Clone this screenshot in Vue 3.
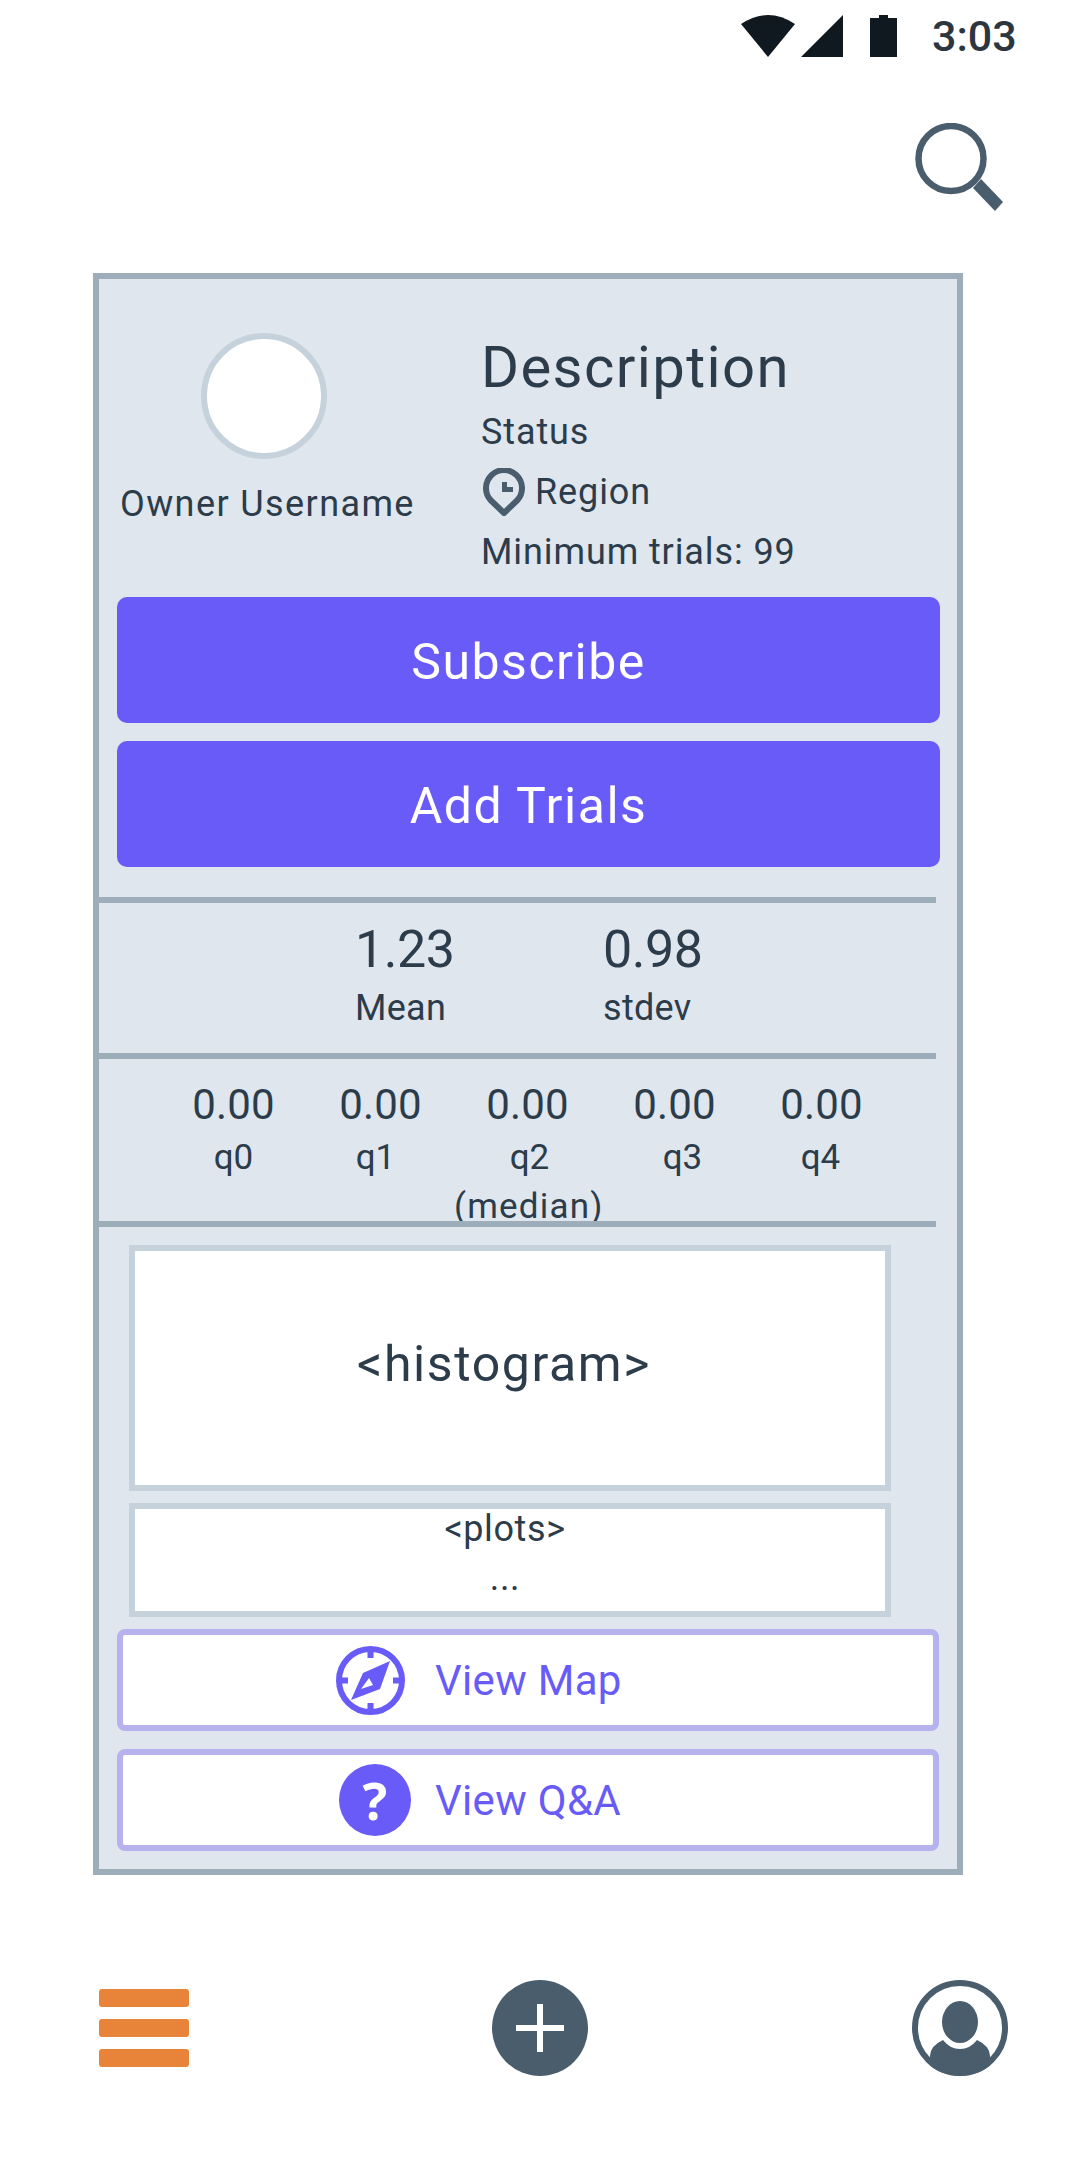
<script setup>
const quartiles = [
  { value: '0.00', label: 'q0', shift: 0 },
  { value: '0.00', label: 'q1', shift: -10 },
  { value: '0.00', label: 'q2', shift: 4 },
  { value: '0.00', label: 'q3', shift: 16 },
  { value: '0.00', label: 'q4', shift: -2 }
]
</script>

<template>
  <div class="screen">
    <!-- status bar -->
    <div class="status-bar">
      <svg class="wifi" viewBox="0 0 54 42"><path d="M27 42 0 9Q27-9 54 9Z" /></svg>
      <svg class="signal" viewBox="0 0 42 42"><path d="M0 42 42 0V42Z" /></svg>
      <svg class="battery" viewBox="0 0 27 42"><path d="M9 0H18V3H27V42H0V3H9Z" /></svg>
      <span class="clock">3:03</span>
    </div>

    <div class="top-bar">
      <svg class="search" viewBox="0 0 90 90">
        <circle cx="36" cy="35.5" r="32.5" fill="none" stroke="#4a5d6d" stroke-width="6.5" />
        <path d="M58 65 66 56 88 79 80 88Z" fill="#4a5d6d" />
      </svg>
    </div>

    <div class="card">
      <div class="head">
        <div class="owner">
          <div class="avatar"></div>
          <div class="owner-name">Owner Username</div>
        </div>
        <div class="info">
          <div class="title">Description</div>
          <div class="line">Status</div>
          <div class="line region">
            <svg class="pin" viewBox="0 0 42 48">
              <path d="M21 45 7.5 32A18 18 0 1 1 34.5 32Z" fill="none" stroke="#4a5d6d" stroke-width="6" stroke-linejoin="round" />
              <path d="M19 14H24V19H30V24H19Z" fill="#4a5d6d" />
            </svg>
            <span>Region</span>
          </div>
          <div class="line">Minimum trials: 99</div>
        </div>
      </div>

      <button class="btn-primary subscribe">Subscribe</button>
      <button class="btn-primary">Add Trials</button>

      <div class="stats">
        <div class="stat">
          <div class="stat-value">1.23</div>
          <div class="stat-label">Mean</div>
        </div>
        <div class="stat">
          <div class="stat-value">0.98</div>
          <div class="stat-label">stdev</div>
        </div>
      </div>

      <div class="quartiles">
        <div v-for="q in quartiles" :key="q.label" class="quartile">
          <div class="q-value">{{ q.value }}</div>
          <div class="q-label" :style="{ marginLeft: q.shift + 'px' }">{{ q.label }}</div>
          <div v-if="q.label === 'q2'" class="q-label q-note">(median)</div>
        </div>
      </div>

      <div class="charts">
        <div class="histogram">&lt;histogram&gt;</div>
        <div class="plots">
          <div>&lt;plots&gt;</div>
          <div>...</div>
        </div>
      </div>

      <button class="btn-outline map-btn">
        <svg class="compass" viewBox="0 0 69 69">
          <circle cx="34.5" cy="34.5" r="31.5" fill="none" stroke="#685bf7" stroke-width="6" />
          <path d="M31.5 3H37.5V12H31.5ZM31.5 57H37.5V66H31.5ZM3 31.5H12V37.5H3ZM57 31.5H66V37.5H57Z" fill="#685bf7" />
          <path fill-rule="evenodd" d="M54 15 44 43 15 54 27 27ZM33 32 25 43 37 39Z" fill="#685bf7" />
        </svg>
        <span>View Map</span>
      </button>
      <button class="btn-outline qa-btn">
        <span class="qa-icon">?</span>
        <span>View Q&amp;A</span>
      </button>
    </div>

    <!-- bottom nav -->
    <div class="bottom-nav">
      <div class="menu">
        <span></span>
        <span></span>
        <span></span>
      </div>
      <svg class="round-icon add" viewBox="0 0 96 96">
        <circle cx="48" cy="48" r="48" fill="#4a5d6d" />
        <path d="M45 24H51V45H72V51H51V72H45V51H24V45H45Z" fill="#fff" />
      </svg>
      <svg class="round-icon profile" viewBox="0 0 96 96">
        <defs>
          <clipPath id="profile-clip"><circle cx="48" cy="48" r="48" /></clipPath>
        </defs>
        <circle cx="48" cy="48" r="45" fill="#fff" stroke="#4a5d6d" stroke-width="6" />
        <ellipse cx="48" cy="42" rx="18" ry="21" fill="#4a5d6d" />
        <path clip-path="url(#profile-clip)" d="M18 96V76Q18 66 31 60 38 69 48 69 58 69 65 60 78 66 78 76V96Z" fill="#4a5d6d" />
      </svg>
    </div>
  </div>
</template>

<style>
html, body {
  margin: 0;
  background: #fff;
}
</style>

<style scoped>
.screen {
  width: 1080px;
  height: 2160px;
  background: #fff;
  color: #2c3c4a;
  font-family: Roboto, "Noto Sans", sans-serif;
  box-sizing: border-box;
  overflow: hidden;
}

.status-bar {
  height: 72px;
  box-sizing: border-box;
  padding: 15px 66px 0 741px;
  display: flex;
  align-items: flex-start;
}
.status-bar svg { fill: #10191f; flex-shrink: 0; }
.wifi { width: 54px; height: 42px; margin-right: 6px; }
.signal { width: 42px; height: 42px; margin-right: 27px; }
.battery { width: 27px; height: 42px; margin-right: 35px; }
.clock {
  font-size: 43px;
  line-height: 42px;
  font-weight: 500;
  color: #2c3640;
  white-space: nowrap;
}

.top-bar {
  height: 201px;
  box-sizing: border-box;
  padding: 51px 0 0 915px;
}
.search { display: block; width: 90px; height: 90px; }

.card {
  width: 870px;
  height: 1602px;
  margin-left: 93px;
  box-sizing: border-box;
  border: 6px solid #9dadba;
  background: #dfe6ee;
}

.head {
  display: flex;
  height: 318px;
}
.owner {
  width: 382px;
  box-sizing: border-box;
  padding: 54px 0 0 21px;
}
.avatar {
  width: 126px;
  height: 126px;
  box-sizing: border-box;
  margin-left: 81px;
  border: 6px solid #c5d2dc;
  border-radius: 50%;
  background: #fff;
}
.owner-name {
  margin-top: 23px;
  font-size: 36px;
  line-height: 44px;
  letter-spacing: 1.4px;
  white-space: nowrap;
}
.info { padding-top: 53px; }
.title {
  font-size: 58px;
  line-height: 70px;
  letter-spacing: 1.4px;
  white-space: nowrap;
}
.line {
  font-size: 36px;
  line-height: 60px;
  letter-spacing: 0.9px;
  white-space: nowrap;
}
.region {
  display: flex;
  align-items: center;
}
.pin {
  width: 42px;
  height: 48px;
  margin: 0 10px 0 2px;
  flex-shrink: 0;
}

.btn-primary {
  display: block;
  width: 823px;
  height: 126px;
  margin-left: 18px;
  padding: 3px 0 0;
  border: none;
  border-radius: 10px;
  background: #685bf7;
  color: #fff;
  font-family: inherit;
  font-size: 50px;
  letter-spacing: 1.5px;
}
.subscribe { margin-bottom: 18px; }

.stats {
  display: flex;
  height: 156px;
  box-sizing: border-box;
  width: 837px;
  margin-top: 30px;
  border-top: 6px solid #9dadba;
  padding: 14px 0 0 256px;
}
.stat { width: 248px; }
.stat-value {
  font-size: 52px;
  line-height: 66px;
  letter-spacing: -0.5px;
}
.stat-label {
  font-size: 36px;
  line-height: 50px;
  letter-spacing: 0.3px;
}

.quartiles {
  display: grid;
  grid-template-columns: repeat(5, 147px);
  height: 168px;
  width: 837px;
  box-sizing: border-box;
  overflow: hidden;
  border-top: 6px solid #9dadba;
  padding: 21px 0 0 61px;
  text-align: center;
}
.q-value {
  font-size: 42px;
  line-height: 50px;
  letter-spacing: 0.2px;
}
.q-label {
  margin-top: 3px;
  font-size: 35px;
  line-height: 50px;
  white-space: nowrap;
}
.q-note {
  margin-top: -1px;
  letter-spacing: 1.2px;
}

.charts {
  border-top: 6px solid #9dadba;
  width: 837px;
  box-sizing: border-box;
  padding: 18px 0 0 30px;
}
.histogram {
  width: 762px;
  height: 246px;
  box-sizing: border-box;
  padding: 0 12px 8px 0;
  border: 6px solid #c5d2dc;
  background: #fff;
  display: flex;
  align-items: center;
  justify-content: center;
  font-size: 50px;
  letter-spacing: 1.6px;
}
.plots {
  width: 762px;
  height: 114px;
  box-sizing: border-box;
  margin-top: 12px;
  padding-right: 10px;
  border: 6px solid #c5d2dc;
  background: #fff;
  text-align: center;
  font-size: 36px;
  line-height: 49px;
  letter-spacing: 0.6px;
}
.plots div:first-child { margin-top: -4px; }

.btn-outline {
  display: flex;
  align-items: center;
  justify-content: flex-start;
  width: 822px;
  height: 102px;
  margin-left: 18px;
  box-sizing: border-box;
  border: 6px solid #b5b2ee;
  border-radius: 8px;
  background: #fff;
  color: #685bf7;
  font-family: inherit;
  font-size: 42px;
  letter-spacing: 0.3px;
}
.map-btn { margin-top: 12px; margin-bottom: 18px; padding: 0 0 0 213px; }
.qa-btn { padding: 0 0 0 216px; }
.compass { width: 69px; height: 69px; margin-right: 30px; flex-shrink: 0; }
.qa-icon {
  width: 72px;
  height: 72px;
  margin-right: 24px;
  border-radius: 50%;
  background: #685bf7;
  color: #fff;
  font-family: "Open Sans", sans-serif;
  font-weight: 700;
  font-size: 52px;
  line-height: 72px;
  text-align: center;
  flex-shrink: 0;
}

.bottom-nav {
  display: flex;
  align-items: center;
  padding: 105px 72px 0 99px;
}
.menu {
  display: flex;
  flex-direction: column;
  gap: 12px;
  width: 90px;
}
.menu span {
  height: 18px;
  border-radius: 3px;
  background: #e8833a;
}
.round-icon { display: block; width: 96px; height: 96px; }
.add { margin-left: 303px; }
.profile { margin-left: auto; }
</style>
